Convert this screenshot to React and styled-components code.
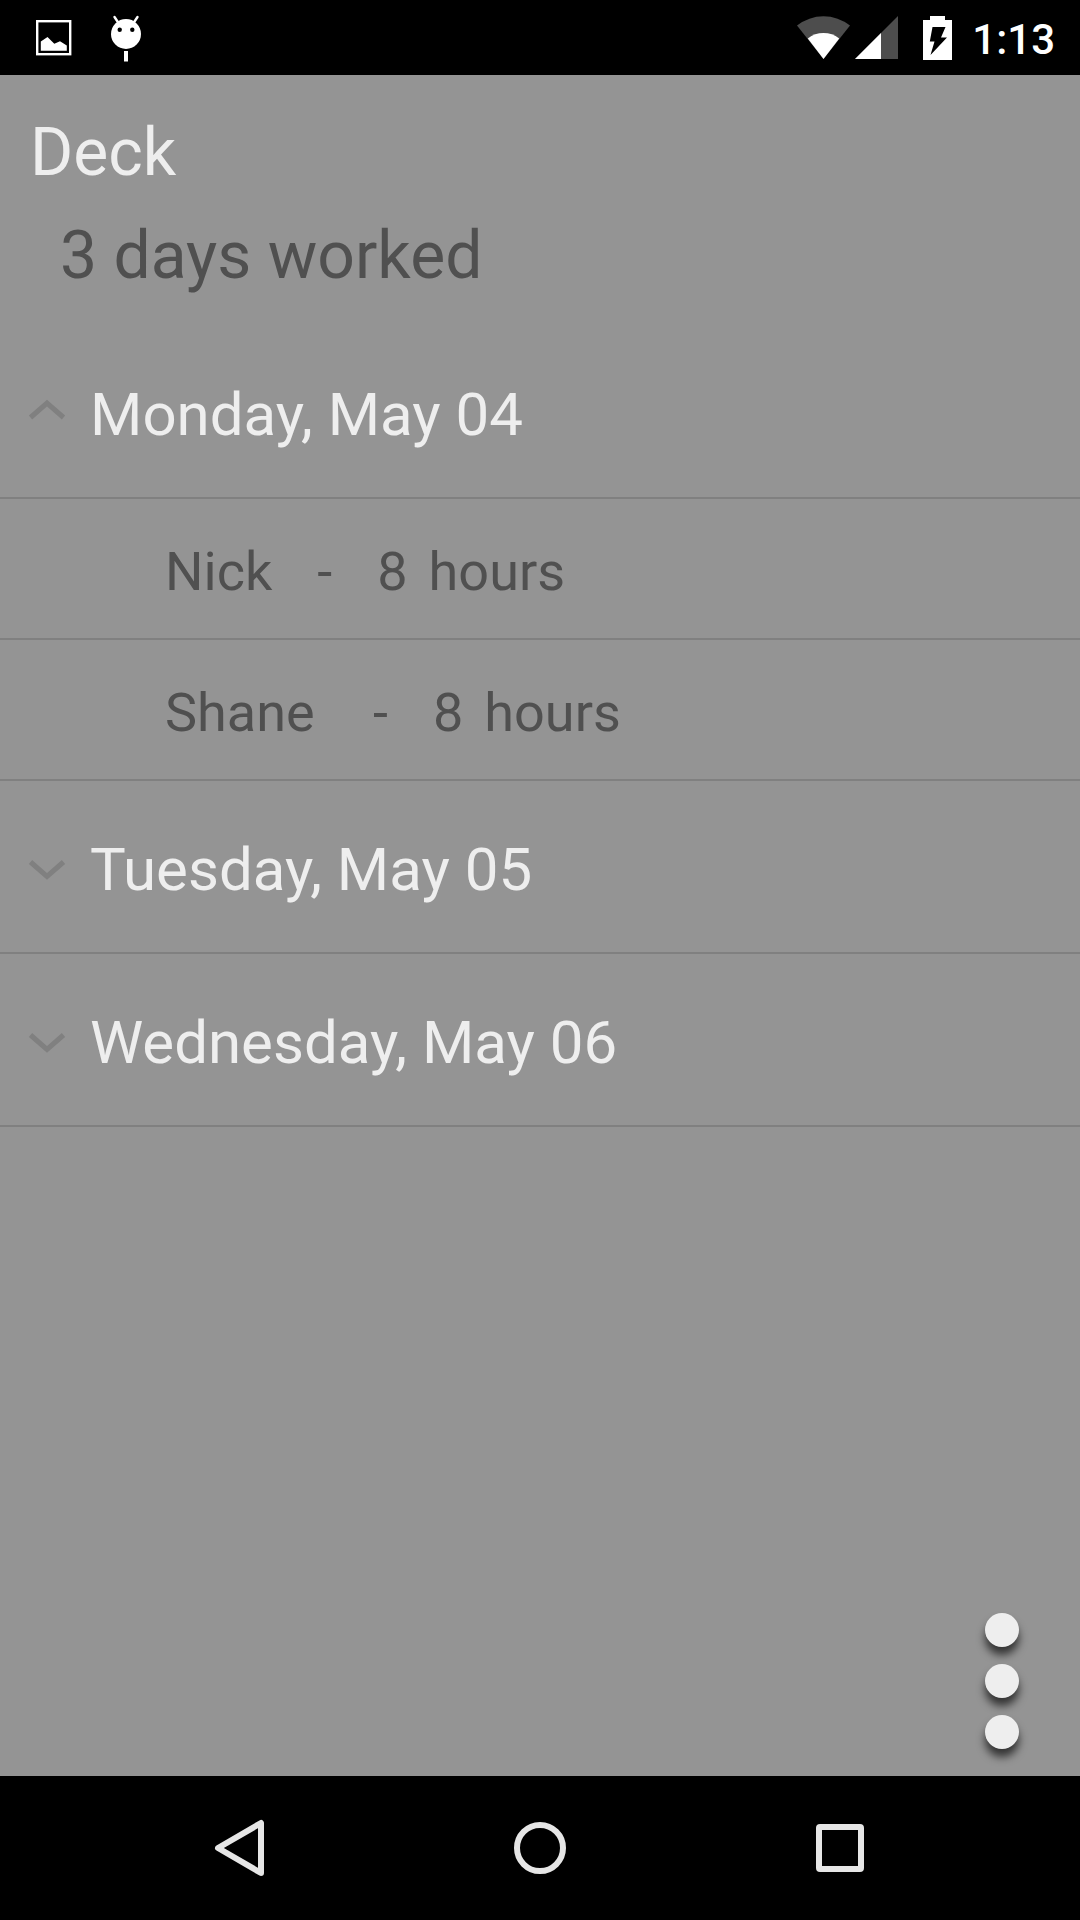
import React, { useState } from 'react';
import styled, { createGlobalStyle } from 'styled-components';

const days = [
  {
    id: 'mon',
    label: 'Monday, May 04',
    entries: [
      { name: 'Nick', hours: 8 },
      { name: 'Shane ', hours: 8 },
    ],
  },
  {
    id: 'tue',
    label: 'Tuesday, May 05',
    entries: [{ name: 'Nick', hours: 8 }],
  },
  {
    id: 'wed',
    label: 'Wednesday, May 06',
    entries: [{ name: 'Nick', hours: 8 }],
  },
];

const StatusBar = () => (
  <Status>
    <Notifications>
      <svg width="36" height="36" viewBox="0 0 36 36">
        <rect x="1.2" y="1.2" width="33" height="33" fill="none" stroke="#fff" strokeWidth="2.4" />
        <path d="M4.800 30.800V21.500L11.500 17l6.800 6.800 5.700-2.500 6.800 4.200v5.300z" fill="#fff" />
      </svg>
      <svg width="32" height="48" viewBox="0 0 32 48">
        <path d="M4.500 3l4 6M27.500 3l-4 6" stroke="#fff" strokeWidth="2.4" strokeLinecap="round" />
        <circle cx="16" cy="20" r="15" fill="#fff" />
        <circle cx="9.7" cy="15.7" r="2.2" fill="#000" />
        <circle cx="22.3" cy="15.7" r="2.2" fill="#000" />
        <path d="M14 37h4v10.500h-4z" fill="#fff" />
      </svg>
    </Notifications>
    <System>
      <Indicators>
        <svg width="102" height="44" viewBox="0 0 102 44">
          <path d="M0 9.500a43 43 0 0 1 53 0L26.500 43z" fill="#4d4d4d" />
          <path d="M10.800 22.500a25.500 25.500 0 0 1 31.400 0L26.500 43z" fill="#fff" />
          <path d="M101 0v43H58z" fill="#4d4d4d" />
          <path d="M84 17v26H58z" fill="#fff" />
        </svg>
        <svg width="29" height="44" viewBox="0 0 29 44">
          <path d="M7 0h15v4h7v40H0V4h7z" fill="#fff" />
          <path d="M9.500 11H22.500l-4.500 10.500h6L7.500 39l4-13.500H6.800z" fill="#000" />
        </svg>
      </Indicators>
      <Clock>1:13</Clock>
    </System>
  </Status>
);

const DayGroup = ({ day, open, onToggle }) => (
  <li>
    <DayButton type="button" aria-expanded={open} onClick={onToggle}>
      <svg width="48" height="48" viewBox="0 0 48 48">
        <path
          d={open ? 'M7.500 26.500L24 12l16.500 14.500' : 'M7.500 16L24 30.500 40.500 16'}
          fill="none"
          stroke="#808080"
          strokeWidth="5"
        />
      </svg>
      <DayLabel>{day.label}</DayLabel>
    </DayButton>
    {open && (
      <List>
        {day.entries.map((entry) => (
          <Entry key={entry.name}>
            <Worker>{entry.name}</Worker>
            <Hours>
              <span>-</span>
              <Amount>
                <span>{entry.hours}</span>
                <span>hours</span>
              </Amount>
            </Hours>
          </Entry>
        ))}
      </List>
    )}
  </li>
);

const App = () => {
  const [openDays, setOpenDays] = useState({ mon: true });

  const toggleDay = (id) => {
    setOpenDays((prev) => ({ ...prev, [id]: !prev[id] }));
  };

  return (
    <Screen>
      <GlobalStyle />
      <StatusBar />
      <Content>
        <Header>
          <Title>Deck</Title>
          <Summary>3 days worked</Summary>
        </Header>
        <List>
          {days.map((day) => (
            <DayGroup
              key={day.id}
              day={day}
              open={!!openDays[day.id]}
              onToggle={() => toggleDay(day.id)}
            />
          ))}
        </List>
        <MenuButton type="button" aria-label="More options">
          <Dot />
          <Dot />
          <Dot />
        </MenuButton>
      </Content>
      <NavBar>
        <NavButton type="button" aria-label="Back">
          <svg width="56" height="60" viewBox="0 0 56 60">
            <path d="M49 5v50L6 30z" />
          </svg>
        </NavButton>
        <NavButton type="button" aria-label="Home">
          <svg width="56" height="60" viewBox="0 0 56 60">
            <circle cx="28" cy="30" r="23" />
          </svg>
        </NavButton>
        <NavButton type="button" aria-label="Recent apps">
          <svg width="56" height="60" viewBox="0 0 56 60">
            <rect x="7" y="9" width="42" height="42" rx="1" />
          </svg>
        </NavButton>
      </NavBar>
    </Screen>
  );
};

// Styled Components
const GlobalStyle = createGlobalStyle`
  * {
    box-sizing: border-box;
  }

  body {
    margin: 0;
    background: #949494;
    font-family: Roboto, sans-serif;
  }

  button {
    border: none;
    background: none;
    font: inherit;
    cursor: pointer;
  }

  svg {
    display: block;
    flex-shrink: 0;
  }
`;

const Screen = styled.div`
  display: flex;
  flex-direction: column;
  min-height: 100vh;
  background: #949494;
`;

const Status = styled.div`
  display: flex;
  justify-content: space-between;
  align-items: center;
  height: 75px;
  padding: 0 25px 0 36px;
  background: #000;
`;

const Notifications = styled.div`
  display: flex;
  align-items: center;
  gap: 38px;
`;

const System = styled.div`
  display: flex;
  align-items: center;
  gap: 20px;
`;

const Indicators = styled.div`
  display: flex;
  gap: 24px;
`;

const Clock = styled.span`
  padding-top: 4px;
  color: #fff;
  font-size: 42px;
  font-weight: 500;
  line-height: 48px;
`;

const Content = styled.main`
  flex: 1;
  display: flex;
  flex-direction: column;
`;

const Header = styled.header`
  display: flex;
  flex-direction: column;
  gap: 26px;
  padding: 39px 30px 32px;
  font-size: 66px;
  line-height: 77px;
`;

const Title = styled.h1`
  margin: 0;
  color: #eee;
  font-size: inherit;
  font-weight: 400;
`;

const Summary = styled.p`
  margin: 0;
  padding-left: 30px;
  color: #505050;
`;

const List = styled.ul`
  margin: 0;
  padding: 0;
  list-style: none;
`;

const DayButton = styled.button`
  display: flex;
  align-items: center;
  gap: 19px;
  width: 100%;
  padding: 54px 23px 47px;
  border-bottom: 2px solid #808080;
  text-align: left;
`;

const DayLabel = styled.span`
  color: #eee;
  font-size: 60px;
  line-height: 70px;
`;

const Entry = styled.li`
  display: flex;
  gap: 45px;
  padding: 41px 24px 35px 165px;
  border-bottom: 2px solid #808080;
  color: #505050;
  font-size: 54px;
  line-height: 63px;
`;

const Worker = styled.span`
  white-space: pre;
`;

const Hours = styled.span`
  display: flex;
  gap: 45px;
`;

const Amount = styled.span`
  display: flex;
  gap: 21px;
`;

const MenuButton = styled.button`
  display: flex;
  flex-direction: column;
  gap: 17px;
  margin: auto 61px 27px auto;
  padding: 0;
`;

const Dot = styled.span`
  width: 34px;
  height: 34px;
  border-radius: 50%;
  background: #eee;
  box-shadow: 0 8px 8px rgba(0, 0, 0, 0.65);
`;

const NavBar = styled.nav`
  display: flex;
  justify-content: center;
  height: 144px;
  padding: 0 90px;
  background: #000;
`;

const NavButton = styled.button`
  flex: 1;
  display: flex;
  justify-content: center;
  align-items: center;
  padding: 0;

  svg {
    fill: none;
    stroke: #e6e6e6;
    stroke-width: 6;
    stroke-linejoin: round;
  }
`;

export default App;
